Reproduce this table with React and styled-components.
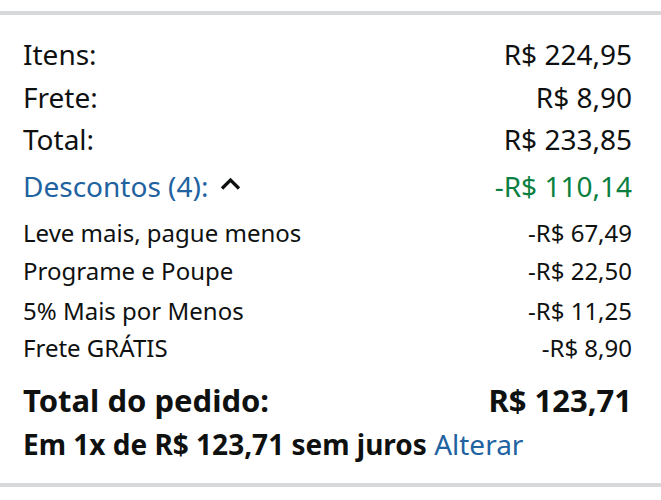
import React from 'react';
import styled, { createGlobalStyle } from 'styled-components';

const GlobalStyle = createGlobalStyle`
  html, body {
    margin: 0;
    padding: 0;
    background: #fff;
  }
  body {
    font-family: 'Noto Sans', 'Open Sans', sans-serif;
    color: #0f1111;
  }
`;

const Summary = styled.section`
  width: 661px;
  height: 500px;
  box-sizing: border-box;
  padding-top: 11px;
`;

const Divider = styled.hr`
  margin: 0;
  border: 0;
  height: 4px;
  background: #d5d9d9;
`;

const Body = styled.div`
  padding: 20px 29px 18px 23px;
  display: flex;
  flex-direction: column;
`;

const Row = styled.div`
  display: flex;
  justify-content: space-between;
  align-items: baseline;
  height: ${p => p.$h}px;
  font-size: ${p => p.$size}px;
  font-weight: ${p => (p.$bold ? 700 : 400)};
  white-space: nowrap;
`;

const Label = styled.span`
  display: flex;
  align-items: center;
  gap: 12px;
  color: ${p => p.$color || 'inherit'};
`;

const Amount = styled.span`
  color: ${p => p.$color || 'inherit'};
`;

const Link = styled.span`
  color: #2162a1;
  font-weight: 400;
`;

const Chevron = () => (
  <svg width="21" height="13" viewBox="0 0 21 13" style={{ marginTop: -6 }}>
    <path d="M2 11.5 L10.5 3 L19 11.5" fill="none" stroke="#0f1111" strokeWidth="3.3" />
  </svg>
);

const discounts = [
  ['Leve mais, pague menos', '-R$ 67,49', 38],
  ['Programe e Poupe', '-R$ 22,50', 40],
  ['5% Mais por Menos', '-R$ 11,25', 37],
  ['Frete GRÁTIS', '-R$ 8,90', 48],
];

export default function App() {
  return (
    <>
      <GlobalStyle />
      <Summary>
        <Divider />
        <Body>
          <Row $h={43} $size={28}>
            <span>Itens:</span>
            <Amount>R$ 224,95</Amount>
          </Row>
          <Row $h={42} $size={28}>
            <span>Frete:</span>
            <Amount>R$ 8,90</Amount>
          </Row>
          <Row $h={47} $size={28}>
            <span>Total:</span>
            <Amount>R$ 233,85</Amount>
          </Row>
          <Row $h={49} $size={28}>
            <Label $color="#2162a1">
              Descontos (4):
              <Chevron />
            </Label>
            <Amount $color="#0a7f3f">-R$ 110,14</Amount>
          </Row>
          {discounts.map(([name, value, h]) => (
            <Row key={name} $h={h} $size={24}>
              <span>{name}</span>
              <Amount>{value}</Amount>
            </Row>
          ))}
          <Row $h={46} $size={31} $bold>
            <span>Total do pedido:</span>
            <Amount>R$ 123,71</Amount>
          </Row>
          <Row $h={40} $size={28} $bold>
            <span>
              Em 1x de R$ 123,71 sem juros <Link>Alterar</Link>
            </span>
          </Row>
        </Body>
        <Divider />
      </Summary>
    </>
  );
}
